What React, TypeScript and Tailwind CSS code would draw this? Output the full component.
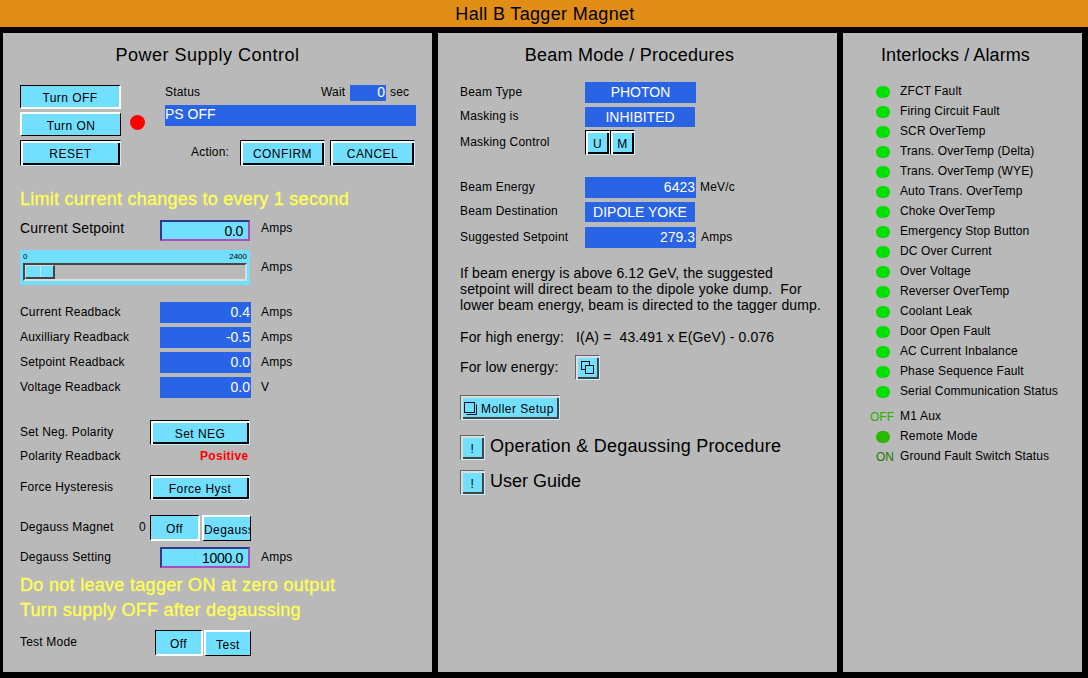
import React from 'react';

const FONT = "font-['Liberation_Sans',Arial,sans-serif]";

// motif-style button bevels
const bevels = {
  up: 'border border-t-black border-l-black border-r-[#c4f1ff] border-b-[#c4f1ff] shadow-[inset_2px_2px_0_#fff,inset_-2px_-2px_0_#000]',
  flatOn: 'border border-t-black border-l-black border-r-white border-b-white border-b-2 border-r-2',
  flatOff: 'border-t-2 border-l-2 border-t-white border-l-white border-b border-r border-b-black border-r-black',
  gray: 'border border-t-[#666] border-l-[#666] border-r-[#c4f1ff] border-b-[#c4f1ff] shadow-[inset_2px_2px_0_#ddd,inset_-2px_-2px_0_#444]',
};

const Btn: React.FC<{
  kind: keyof typeof bevels;
  className: string;
  children: React.ReactNode;
}> = ({ kind, className, children }) => (
  <div className={`${bevels[kind]} ${className} box-border bg-[#73dfff] flex items-center justify-center overflow-hidden whitespace-nowrap pt-[2px] text-[12px] tracking-[0.45px] text-black`}>
    {children}
  </div>
);

const Label: React.FC<{ className?: string; children: React.ReactNode }> = ({ className = '', children }) => (
  <span className={`pb-[2px] text-[12px] tracking-[0.2px] text-black whitespace-nowrap ${className}`}>{children}</span>
);

const Readback: React.FC<{ label: string; value: string; unit: string }> = ({ label, value, unit }) => (
  <div className="flex items-center h-[21px] mb-[4px]">
    <Label className="w-[140px]">{label}</Label>
    <div className="w-[91px] h-[21px] bg-[#2a64e6] text-white text-[14px] leading-[20px] text-right pr-[1px]">{value}</div>
    <Label className="ml-[10px]">{unit}</Label>
  </div>
);

const Entry: React.FC<{ value: string }> = ({ value }) => (
  <div className="w-[90px] h-[21px] box-border border-2 border-t-[#2e3a8c] border-l-[#2e3a8c] border-r-[#a84fc0] border-b-[#a84fc0] bg-[#73dfff] text-black text-[14px] leading-[19px] tracking-[-0.3px] text-right pr-[5px]">
    {value}
  </div>
);

const Led: React.FC<{ color?: string }> = ({ color = 'bg-[#00e000]' }) => (
  <div className={`w-[14px] h-[12px] rounded-full ${color}`} />
);

const interlocks = [
  'ZFCT Fault',
  'Firing Circuit Fault',
  'SCR OverTemp',
  'Trans. OverTemp (Delta)',
  'Trans. OverTemp (WYE)',
  'Auto Trans. OverTemp',
  'Choke OverTemp',
  'Emergency Stop Button',
  'DC Over Current',
  'Over Voltage',
  'Reverser OverTemp',
  'Coolant Leak',
  'Door Open Fault',
  'AC Current Inbalance',
  'Phase Sequence Fault',
  'Serial Communication Status',
];

const PowerSupply = () => (
  <div className="w-[429px] bg-[#b9b9b9] pl-[17px] pt-[11px]">
    <h2 className="w-[375px] text-center text-[18px] leading-[22px] tracking-[0.5px] text-black">Power Supply Control</h2>

    <div className="flex mt-[19px] h-[81px]">
      <div className="w-[100px] flex flex-col">
        <Btn kind="flatOn" className="h-[24px] w-[101px]">Turn OFF</Btn>
        <Btn kind="flatOff" className="h-[24px] w-[101px] mt-[3px]">Turn ON</Btn>
        <Btn kind="up" className="h-[26px] w-[101px] mt-[4px]">RESET</Btn>
      </div>
      <div className="w-[45px] pl-[10px] pt-[30px]">
        <div className="w-[15px] h-[15px] rounded-full bg-[#ff0000]" />
      </div>
      <div className="w-[251px]">
        <div className="flex items-center h-[16px]">
          <Label className="w-[156px]">Status</Label>
          <Label className="w-[29px]">Wait</Label>
          <div className="w-[36px] h-[16px] bg-[#2a64e6] text-white text-[14px] leading-[15px] text-right pr-[1px]">0</div>
          <Label className="ml-[4px]">sec</Label>
        </div>
        <div className="h-[21px] mt-[4px] bg-[#2a64e6] text-white text-[14px] leading-[19px]">PS OFF</div>
        <div className="flex items-center mt-[14px]">
          <Label className="w-[75px] pl-[26px]">Action:</Label>
          <Btn kind="up" className="h-[26px] w-[85px]">CONFIRM</Btn>
          <Btn kind="up" className="h-[26px] w-[85px] ml-[5px]">CANCEL</Btn>
        </div>
      </div>
    </div>

    <p className="mt-[22px] text-[18px] leading-[22px] tracking-[0.25px] text-[#ffff50] [-webkit-text-stroke:0.3px_#ffff50]">Limit current changes to every 1 second</p>

    <div className="flex items-center mt-[10px] h-[21px]">
      <Label className="w-[140px] text-[14px] tracking-[0.15px] pb-[4px]">Current Setpoint</Label>
      <Entry value="0.0" />
      <Label className="ml-[11px] pb-[6px]">Amps</Label>
    </div>

    <div className="flex items-center mt-[9px]">
      <div className="w-[230px] h-[35px] bg-[#73dfff] px-[3px]">
        <div className="flex justify-between h-[13px] text-[8px] leading-[13px] text-black">
          <span>0</span>
          <span>2400</span>
        </div>
        <div className="h-[18px] box-border border-2 border-t-[#444] border-l-[#444] border-r-[#ddd] border-b-[#ddd] bg-[#b9b9b9]">
          <div className="w-[30px] h-[14px] box-border border-t border-l border-t-[#ddd] border-l-[#ddd] border-b-2 border-r-2 border-b-[#444] border-r-[#444] flex gap-[1px] bg-[#ddd]">
            <div className="w-[14px] h-[11px] bg-[#73dfff]" />
            <div className="w-[12px] h-[11px] bg-[#73dfff]" />
          </div>
        </div>
      </div>
      <Label className="ml-[11px]">Amps</Label>
    </div>

    <div className="mt-[17px]">
      <Readback label="Current Readback" value="0.4" unit="Amps" />
      <Readback label="Auxilliary Readback" value="-0.5" unit="Amps" />
      <Readback label="Setpoint Readback" value="0.0" unit="Amps" />
      <Readback label="Voltage Readback" value="0.0" unit="V" />
    </div>

    <div className="flex items-center mt-[22px] h-[25px]">
      <Label className="w-[130px]">Set Neg. Polarity</Label>
      <Btn kind="up" className="h-[25px] w-[100px]">Set NEG</Btn>
    </div>
    <div className="flex items-center mt-[4px] h-[16px]">
      <Label className="w-[180px]">Polarity Readback</Label>
      <span className="pb-[2px] text-[12px] tracking-[0.3px] font-bold text-[#ff0000]">Positive</span>
    </div>
    <div className="flex items-center mt-[10px] h-[25px]">
      <Label className="w-[130px]">Force Hysteresis</Label>
      <Btn kind="up" className="h-[25px] w-[100px]">Force Hyst</Btn>
    </div>

    <div className="flex items-center mt-[15px] h-[26px]">
      <Label className="w-[119px]">Degauss Magnet</Label>
      <Label className="w-[11px]">0</Label>
      <Btn kind="flatOn" className="h-[26px] w-[50px]">Off</Btn>
      <Btn kind="flatOff" className="h-[26px] w-[49px] ml-[2px] justify-start">Degauss</Btn>
    </div>
    <div className="flex items-center mt-[6px] h-[21px]">
      <Label className="w-[140px]">Degauss Setting</Label>
      <Entry value="1000.0" />
      <Label className="ml-[11px]">Amps</Label>
    </div>

    <p className="mt-[6px] text-[18px] leading-[22px] tracking-[0.3px] text-[#ffff50] [-webkit-text-stroke:0.3px_#ffff50]">Do not leave tagger ON at zero output</p>
    <p className="mt-[3px] text-[18px] leading-[22px] tracking-[0.26px] text-[#ffff50] [-webkit-text-stroke:0.3px_#ffff50]">Turn supply OFF after degaussing</p>

    <div className="flex items-center mt-[9px] h-[26px]">
      <Label className="w-[135px]">Test Mode</Label>
      <Btn kind="flatOn" className="h-[26px] w-[48px]">Off</Btn>
      <Btn kind="flatOff" className="h-[26px] w-[47px] ml-[1px]">Test</Btn>
    </div>
  </div>
);

const Field: React.FC<{ label: string; children: React.ReactNode; className?: string }> = ({ label, children, className = '' }) => (
  <div className={`flex items-center ${className}`}>
    <Label className="w-[125px]">{label}</Label>
    {children}
  </div>
);

const BlueText: React.FC<{ w: string; h: string; right?: boolean; children: React.ReactNode }> = ({ w, h, right, children }) => (
  <div className={`${w} ${h} bg-[#2a64e6] text-white text-[14px] flex items-center ${right ? 'justify-end pr-[1px]' : 'justify-center'}`}>
    {children}
  </div>
);

const BeamMode = () => (
  <div className="w-[399px] bg-[#b9b9b9] pl-[22px] pt-[11px]">
    <h2 className="w-[339px] text-center text-[18px] leading-[22px] tracking-[0.25px] text-black">Beam Mode / Procedures</h2>

    <Field label="Beam Type" className="mt-[16px] h-[21px]">
      <BlueText w="w-[111px]" h="h-[21px]">PHOTON</BlueText>
    </Field>
    <Field label="Masking is" className="mt-[4px] h-[20px]">
      <BlueText w="w-[110px]" h="h-[20px]">INHIBITED</BlueText>
    </Field>
    <Field label="Masking Control" className="mt-[3px] h-[25px]">
      <Btn kind="up" className="h-[25px] w-[25px]">U</Btn>
      <Btn kind="up" className="h-[25px] w-[25px]">M</Btn>
    </Field>

    <Field label="Beam Energy" className="mt-[22px] h-[21px]">
      <BlueText w="w-[111px]" h="h-[21px]" right>6423</BlueText>
      <Label className="ml-[4px]">MeV/c</Label>
    </Field>
    <Field label="Beam Destination" className="mt-[4px] h-[20px]">
      <BlueText w="w-[110px]" h="h-[20px]">DIPOLE YOKE</BlueText>
    </Field>
    <Field label="Suggested Setpoint" className="mt-[5px] h-[21px]">
      <BlueText w="w-[111px]" h="h-[21px]" right>279.3</BlueText>
      <Label className="ml-[5px]">Amps</Label>
    </Field>

    <p className="mt-[17px] text-[14px] leading-[16px] tracking-[0.13px] text-black whitespace-pre">
      {'If beam energy is above 6.12 GeV, the suggested\nsetpoint will direct beam to the dipole yoke dump.  For\nlower beam energy, beam is directed to the tagger dump.'}
    </p>
    <p className="mt-[16px] text-[14px] leading-[16px] tracking-[0.13px] text-black whitespace-pre">{'For high energy:   I(A) =  43.491 x E(GeV) - 0.076'}</p>

    <div className="flex items-center mt-[10px] h-[25px]">
      <span className="w-[115px] text-[14px] tracking-[0.13px] text-black">For low energy:</span>
      <Btn kind="gray" className="h-[25px] w-[25px]">
        <svg width="13" height="13" viewBox="0 0 13 13" fill="#73dfff" stroke="#111" strokeWidth="1" className="mb-[2px]">
          <rect x="0.5" y="0.5" width="8" height="8" />
          <rect x="4.5" y="4.5" width="8" height="8" />
        </svg>
      </Btn>
    </div>

    <Btn kind="gray" className="h-[25px] w-[100px] mt-[15px] justify-start pl-[3px] text-[#223]">
      <svg width="13" height="13" viewBox="0 0 13 13" fill="none" stroke="#112" strokeWidth="1" className="mr-[4px] mb-[1px]">
        <rect x="0.5" y="0.5" width="10" height="10" />
        <path d="M12.5 2.5v10h-10" />
      </svg>
      Moller Setup
    </Btn>

    <div className="flex items-center mt-[15px] h-[25px]">
      <Btn kind="gray" className="h-[25px] w-[25px]">!</Btn>
      <span className="ml-[5px] pb-[2px] text-[18px] tracking-[0.22px] text-black">Operation &amp; Degaussing Procedure</span>
    </div>
    <div className="flex items-center mt-[10px] h-[25px]">
      <Btn kind="gray" className="h-[25px] w-[25px]">!</Btn>
      <span className="ml-[5px] pb-[2px] text-[18px] text-black">User Guide</span>
    </div>
  </div>
);

const Interlocks = () => (
  <div className="w-[239px] bg-[#b9b9b9] pt-[11px]">
    <h2 className="pl-[38px] text-[18px] leading-[22px] tracking-[0.1px] text-black">Interlocks / Alarms</h2>
    <div className="mt-[16px]">
      {interlocks.map((name) => (
        <div key={name} className="flex items-center h-[20px]">
          <div className="w-[57px] pl-[33px]"><Led /></div>
          <Label className="tracking-[0.12px]">{name}</Label>
        </div>
      ))}
      <div className="flex items-center h-[20px] mt-[5px]">
        <div className="w-[57px] pl-[27px] text-[12px] text-[#2ab000]">OFF</div>
        <Label>M1 Aux</Label>
      </div>
      <div className="flex items-center h-[20px]">
        <div className="w-[57px] pl-[33px]"><Led color="bg-[#28b800]" /></div>
        <Label>Remote Mode</Label>
      </div>
      <div className="flex items-center h-[20px]">
        <div className="w-[57px] pl-[33px] text-[12px] text-[#1f7a00]">ON</div>
        <Label className="tracking-[0.12px]">Ground Fault Switch Status</Label>
      </div>
    </div>
  </div>
);

export default function App() {
  return (
    <div className={`${FONT} w-[1088px] h-[678px] bg-black flex flex-col overflow-hidden`}>
      <div className="h-[27px] bg-[#e08e16] pl-[2px] text-center text-[18px] leading-[29px] tracking-[0.33px] text-black">Hall B Tagger Magnet</div>
      <div className="flex gap-[6px] pl-[3px] pt-[6px] h-[645px]">
        <PowerSupply />
        <BeamMode />
        <Interlocks />
      </div>
    </div>
  );
}
